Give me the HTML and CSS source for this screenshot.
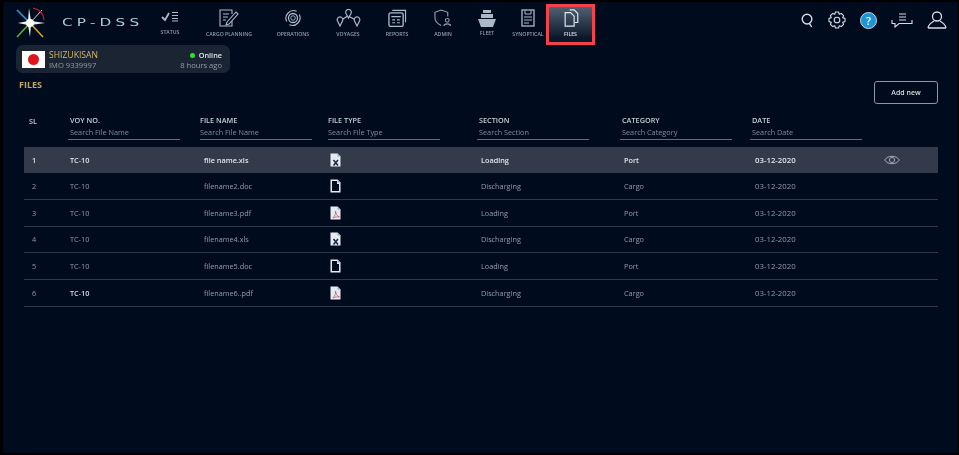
FILE: index.html
```html
<!DOCTYPE html>
<html lang="en">
<head>
  <meta charset="UTF-8">
  <meta name="viewport" content="width=device-width, initial-scale=1.0">
  <title>CP-DSS Files</title>
  <link rel="stylesheet" href="styles.css">
</head>
<body>
  <div class="page">
    <div class="top-bar">
      <div class="logo">
        <svg width="32" height="32" viewBox="0 0 32 32" fill="none">
          <path d="M16 16 L3 3" stroke="#2f9bd8" stroke-width="1.6"/>
          <path d="M16 16 L28 3" stroke="#d8d8e0" stroke-width="1"/>
          <path d="M19 1 Q29 3 30 13" stroke="#c8202c" stroke-width="1.2"/>
          <path d="M16 16 L3 30" stroke="#5cae3c" stroke-width="1.6"/>
          <path d="M16 16 L29 30" stroke="#e0a020" stroke-width="1.6"/>
          <path d="M15 1 L17 14 L31 16 L17 18 L16 30 L14 18 L4 16 L14 14 Z" fill="#e8eef4"/>
          <circle cx="16" cy="16" r="4" fill="#fff"/>
        </svg>
      </div>
      <div class="brand"><span>CP-DSS</span></div>
      <div class="nav">
        <div class="nav-item status">
          <svg width="22" height="18" viewBox="0 0 22 18" fill="none" stroke="#a9bac6">
            <path d="M3 9 L6 12 L10 5" stroke-width="1.8"/>
            <path d="M13 4.5 H19 M13 7.5 H19 M13 10.5 H19 M13 13 H19" stroke-width="1.2"/>
          </svg>
          <span>STATUS</span>
        </div>
        <div class="nav-item">
          <svg width="20" height="18" viewBox="0 0 20 18" fill="none" stroke="#a9bac6" stroke-width="1.1">
            <path d="M13 5 V1 H1 V17 H13 V12"/>
            <path d="M4 5 H10 M4 8 H9 M4 11 H7"/>
            <path d="M8 13 L17 3 L19 5 L10 15 L7 16 Z"/>
          </svg>
          <span>CARGO PLANNING</span>
        </div>
        <div class="nav-item">
          <svg width="18" height="18" viewBox="0 0 20 20" fill="none" stroke="#a9bac6">
            <path d="M3 14 A8.5 8.5 0 0 1 14 2.5" stroke-width="1.3"/>
            <path d="M17 6 A8.5 8.5 0 0 1 6 17.5" stroke-width="1.3"/>
            <circle cx="10" cy="10" r="5" stroke-width="1.4"/>
            <circle cx="10" cy="10" r="2.5" stroke-width="1"/>
          </svg>
          <span>OPERATIONS</span>
        </div>
        <div class="nav-item">
          <svg width="25" height="18" viewBox="0 0 25 18" fill="none" stroke="#a9bac6" stroke-width="1.2">
            <path d="M5 11 L12 7 L20 11"/>
            <path d="M12.5 9 L10 4.5 A2.8 2.8 0 1 1 15 4.5 Z" fill="#000c1e"/>
            <path d="M4 17 L1.5 12 A2.8 2.8 0 1 1 6.5 12 Z" fill="#000c1e"/>
            <path d="M21 17 L18.5 12 A2.8 2.8 0 1 1 23.5 12 Z" fill="#000c1e"/>
          </svg>
          <span>VOYAGES</span>
        </div>
        <div class="nav-item">
          <svg width="20" height="18" viewBox="0 0 20 19" fill="none" stroke="#a9bac6" stroke-width="1.2">
            <path d="M5 1.5 H19 V14"/>
            <rect x="1.5" y="4" width="15" height="14.5" rx="2" stroke-width="1.4"/>
            <path d="M4 8 H14 M5 11.5 H8 M10 11.5 H13 M5 14.5 H8 M10 14.5 H13"/>
          </svg>
          <span>REPORTS</span>
        </div>
        <div class="nav-item">
          <svg width="20" height="18" viewBox="0 0 20 19" fill="none" stroke="#8d9eac" stroke-width="1.2">
            <path d="M8 1 L15 3.5 V8 M8 1 L1.5 3.5 V9 C1.5 13 5 16 8 17.5"/>
            <circle cx="14.5" cy="12" r="2"/>
            <path d="M11 18 C11 15 18 15 18 18"/>
          </svg>
          <span>ADMIN</span>
        </div>
        <div class="nav-item fleet">
          <svg width="20" height="17" viewBox="0 0 20 17" fill="#a9bac6">
            <path d="M6 0 H14 V3 H6 Z"/>
            <path d="M4 4 H16 V8 H4 Z"/>
            <path d="M1 9 H19 L16 17 H4 Z"/>
          </svg>
          <span>FLEET</span>
        </div>
        <div class="nav-item">
          <svg width="14" height="18" viewBox="0 0 14 18" fill="none" stroke="#a9bac6" stroke-width="1.3">
            <rect x="1" y="1" width="12" height="16"/>
            <path d="M4 1.5 V5 H10 V1.5" stroke-width="1"/>
            <path d="M3 8 H11 M3 11 H11 M3 14 H8" stroke-width="1.1"/>
          </svg>
          <span>SYNOPTICAL</span>
        </div>
        <div class="nav-item active">
          <svg width="16" height="18" viewBox="0 0 17 20" fill="none" stroke="#dfe7ee" stroke-width="1.3">
            <path d="M7 1 H12 L16 5 V15 H13"/>
            <path d="M2 4 H8 L12 8 V19 H2 Z"/>
          </svg>
          <span>FILES</span>
        </div>
      </div>
      <div class="tools">
        <svg width="13" height="15" viewBox="0 0 14 16" fill="none" stroke="#d5dde4" stroke-width="1.5">
          <circle cx="6.5" cy="6.5" r="5.2"/>
          <path d="M9 11 L11.5 15"/>
        </svg>
        <svg width="18" height="18" viewBox="0 0 18 18" fill="none" stroke="#d5dde4" stroke-width="1.1">
          <path d="M7.4 1 H10.6 L11.2 3.3 L13.3 2.4 L15.6 4.7 L14.7 6.8 L17 7.4 V10.6 L14.7 11.2 L15.6 13.3 L13.3 15.6 L11.2 14.7 L10.6 17 H7.4 L6.8 14.7 L4.7 15.6 L2.4 13.3 L3.3 11.2 L1 10.6 V7.4 L3.3 6.8 L2.4 4.7 L4.7 2.4 L6.8 3.3 Z" stroke-linejoin="round"/>
          <circle cx="9" cy="9" r="2.8"/>
        </svg>
        <div class="help">?</div>
        <svg width="22" height="15" viewBox="0 0 22 15" fill="none" stroke="#d5dde4" stroke-width="1.1">
          <path d="M8 1 H15 M8 4 H15 M8 7 H15"/>
          <path d="M1 7 V10.5 H4 L4 14 L8 10.5 H21 V7"/>
        </svg>
        <svg width="20" height="18" viewBox="0 0 20 18" fill="none" stroke="#d5dde4" stroke-width="1.3">
          <circle cx="10" cy="5.5" r="4.5"/>
          <path d="M1 17 C2 12 6 11 7 10 M19 17 C18 12 14 11 13 10 M1 17 H19"/>
        </svg>
      </div>
    </div>

    <div class="ship-card">
      <div class="flag"><div class="flag-sun"></div></div>
      <div class="ship-name">
        <div class="gold">SHIZUKISAN</div>
        <div>IMO 9339997</div>
      </div>
      <div class="ship-status">
        <div class="online"><span class="dot"></span>Online</div>
        <div>8 hours ago</div>
      </div>
    </div>

    <div class="title-row">
      <div class="page-title">FILES</div>
      <button class="add-btn">Add new</button>
    </div>

    <div class="file-table">
      <div class="row head">
        <div class="sl-head">SL</div>
        <div class="filter"><div>VOY NO.</div><div class="search">Search File Name</div></div>
        <div class="filter flush"><div>FILE NAME</div><div class="search">Search File Name</div></div>
        <div class="filter flush"><div>FILE TYPE</div><div class="search">Search File Type</div></div>
        <div class="filter"><div>SECTION</div><div class="search">Search Section</div></div>
        <div class="filter"><div>CATEGORY</div><div class="search">Search Category</div></div>
        <div class="filter"><div>DATE</div><div class="search">Search Date</div></div>
      </div>
      <div id="fileRows"></div>
    </div>
  </div>

  <script>
    const files = [
      { voy: "TC-10", name: "file name.xls", type: "xls", section: "Loading", category: "Port", date: "03-12-2020" },
      { voy: "TC-10", name: "filename2.doc", type: "doc", section: "Discharging", category: "Cargo", date: "03-12-2020" },
      { voy: "TC-10", name: "filename3.pdf", type: "pdf", section: "Loading", category: "Port", date: "03-12-2020" },
      { voy: "TC-10", name: "filename4.xls", type: "xls", section: "Discharging", category: "Cargo", date: "03-12-2020" },
      { voy: "TC-10", name: "filename5.doc", type: "doc", section: "Loading", category: "Port", date: "03-12-2020" },
      { voy: "TC-10", name: "filename6..pdf", type: "pdf", section: "Discharging", category: "Cargo", date: "03-12-2020" },
    ];

    const marks = {
      xls: '<path d="M3.5 7 L8 12.5 M8 7 L3.5 12.5" stroke="#1b2a4a" stroke-width="1.6"/>',
      doc: '<path d="M2 2 H7 V5 H9 V12 H2 Z" fill="#000c1e"/>',
      pdf: '<path d="M3 12 C5 10 6 7 5.5 5 C6 8 7 10 9.5 11 C7 10.5 5 11 3 12 Z" fill="none" stroke="#b5626a" stroke-width="0.8"/>',
    };

    function fileIcon(type) {
      return `<svg width="11" height="14" viewBox="0 0 11 14">
        <path d="M0.5 0.5 H7.5 L10.5 3.5 V13.5 H0.5 Z" fill="#e6ebef"/>
        ${marks[type]}
        <path d="M7.5 0.5 V3.5 H10.5 Z" fill="#7fb4d0"/>
      </svg>`;
    }

    const eye = `<svg width="16" height="10" viewBox="0 0 16 10" fill="none" stroke="#a9b4bf" stroke-width="0.9">
      <path d="M0.5 5 C4 0 12 0 15.5 5 C12 10 4 10 0.5 5 Z"/>
      <circle cx="8" cy="5" r="2.6"/>
    </svg>`;

    document.getElementById("fileRows").innerHTML = files.map((file, i) => `
      <div class="row item ${i === 0 ? "selected" : ""}">
        <div class="cell-sl">${i + 1}</div>
        <div class="cell-voy ${i === 5 ? "bright" : ""}">${file.voy}</div>
        <div class="cell">${file.name}</div>
        <div class="cell-icon">${fileIcon(file.type)}</div>
        <div class="cell">${file.section}</div>
        <div class="cell">${file.category}</div>
        <div class="cell-date">${file.date}</div>
        <div class="cell-action">${i === 0 ? eye : ""}</div>
      </div>`).join("");
  </script>
</body>
</html>
```

FILE: styles.css
```css
* {
  box-sizing: border-box;
}
html, body {
  margin: 0;
  height: 100%;
}
body {
  background-color: #000;
  font-family: "Open Sans", Arial, sans-serif;
  font-size: 7.3px;
  color: #929da8;
}
.page {
  height: 455px;
  border-style: solid;
  border-color: #000;
  border-width: 2px 1px 2px 3px;
  background-color: #000c1e;
  overflow: hidden;
  filter: blur(0.3px);
}
.top-bar {
  display: flex;
  align-items: flex-start;
  height: 41px;
  margin-top: 2px;
}
.logo {
  width: 40px;
  padding: 3px 0 0 11px;
  flex-shrink: 0;
}
.brand {
  width: 101px;
  padding: 12px 0 0 19px;
  font-family: "DejaVu Sans", sans-serif;
  font-size: 11px;
  letter-spacing: 3px;
  color: #a9cbdc;
  white-space: nowrap;
}
.brand span {
  display: inline-block;
  transform: scaleX(1.39);
  transform-origin: left center;
}
.nav {
  display: grid;
  grid-template-columns: 52px 66px 62px 48px 50px 42px 46px 36px 49px;
}
.nav-item {
  height: 41px;
  display: flex;
  flex-direction: column;
  align-items: center;
  justify-content: flex-end;
  gap: 3px;
  padding-bottom: 7px;
  font-size: 5.2px;
  font-weight: 600;
  color: #8e9fac;
  white-space: nowrap;
}
.nav-item.status {
  padding-bottom: 9px;
  gap: 2px;
}
.nav-item.fleet {
  padding-bottom: 8px;
  gap: 2px;
}
.nav-item.active {
  border: 3px solid #f4424a;
  padding-bottom: 4px;
  color: #dfe7ee;
  background: linear-gradient(#4e6072, #0a1728 90%);
}
.tools {
  margin-left: auto;
  padding: 7px 11px 0 0;
  display: flex;
  align-items: center;
  gap: 14px;
}
.help {
  width: 17px;
  height: 17px;
  border-radius: 50%;
  background-color: #1e94d6;
  border: 1px solid #bcd8e8;
  color: #fff;
  font-size: 11px;
  font-weight: 600;
  text-align: center;
  line-height: 15px;
}
.ship-card {
  display: flex;
  align-items: center;
  width: 214px;
  height: 28px;
  margin: 0 0 0 13px;
  padding: 0 8px 0 6px;
  background-color: #1a2432;
  border-radius: 7px;
}
.flag {
  width: 23px;
  height: 17px;
  margin-right: 4px;
  background-color: #fff;
  display: flex;
  align-items: center;
  justify-content: center;
}
.flag-sun {
  width: 11px;
  height: 11px;
  border-radius: 50%;
  background-color: #e0141c;
}
.ship-name {
  font-size: 7.6px;
  line-height: 10px;
  padding-top: 2px;
}
.gold {
  font-size: 8.6px;
  color: #d6b765;
}
.ship-status {
  margin-left: auto;
  text-align: right;
  font-size: 7.6px;
  line-height: 10px;
  padding-top: 2px;
}
.online {
  color: #dbe2e8;
  font-size: 7.3px;
  font-weight: 600;
}
.dot {
  display: inline-block;
  width: 5px;
  height: 5px;
  margin-right: 4px;
  border-radius: 50%;
  background-color: #2fe02f;
}
.title-row {
  display: flex;
  justify-content: space-between;
  align-items: flex-start;
  height: 33px;
  margin-top: 8px;
  padding: 0 20px 0 16px;
}
.page-title {
  font-size: 9px;
  line-height: 8px;
  font-weight: 700;
  color: #c3a862;
}
.add-btn {
  width: 64px;
  height: 23px;
  padding: 0;
  background: transparent;
  border: 1px solid #8b98a5;
  border-radius: 3px;
  color: #d3dae0;
  font-family: inherit;
  font-size: 7px;
  font-weight: 600;
}
.file-table {
  margin: 0 20px 0 21px;
}
.row {
  display: grid;
  grid-template-columns: 44px 132px 128px 149px 143px 130px 132px 56px;
}
.head {
  height: 32.5px;
  color: #c4ccd4;
  font-weight: 600;
}
.sl-head {
  padding: 2px 0 0 5px;
}
.filter {
  width: 112px;
  line-height: 10px;
  padding-top: 1px;
}
.filter > div {
  padding-left: 2px;
}
.filter.flush > div {
  padding-left: 0;
}
.filter .search {
  margin-top: 2px;
  padding-bottom: 2px;
  border-bottom: 1px solid #5f6f7d;
  color: #7f8d9a;
  font-weight: 400;
}
.item {
  height: 26.7px;
  align-items: center;
  border-bottom: 1px solid #2e3a47;
}
.item.selected {
  background-color: #333b4a;
  border-top: 1px solid #2e3a47;
  color: #dfe4e9;
  font-weight: 600;
}
.cell-sl {
  padding-left: 8px;
}
.cell-voy {
  padding-left: 2px;
}
.bright {
  color: #d3dae0;
  font-weight: 600;
}
.cell {
  padding-left: 4px;
}
.cell-date {
  padding-left: 5px;
  font-size: 7.8px;
}
.cell-icon {
  display: flex;
  padding-left: 2px;
}
.cell-action {
  display: flex;
  padding-left: 2px;
}
```
